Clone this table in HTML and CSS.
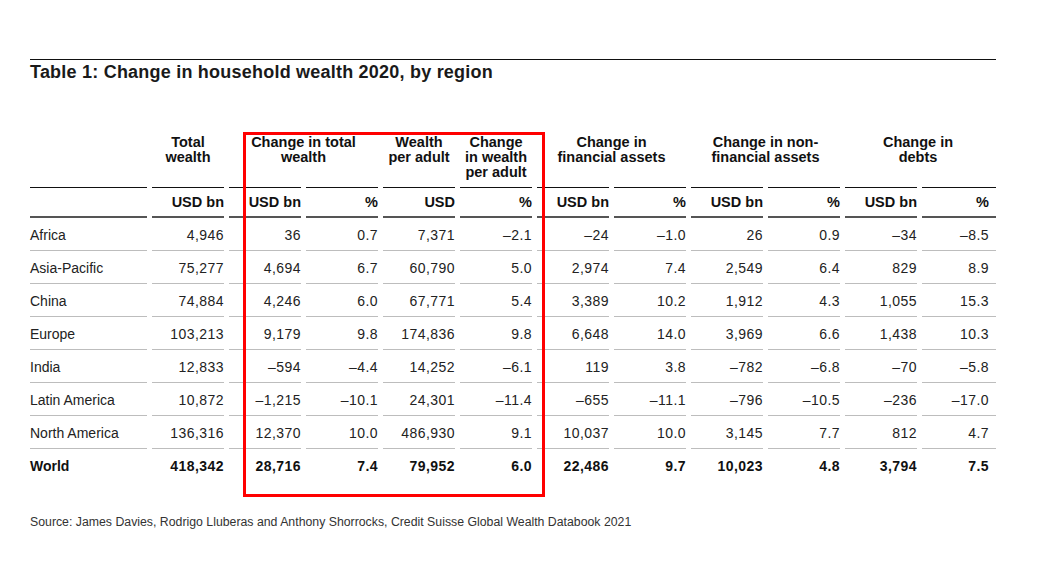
FILE: index.html
```html
<!DOCTYPE html>
<html lang="en">
<head>
<meta charset="utf-8">
<title>Table 1: Change in household wealth 2020, by region</title>
<link rel="stylesheet" href="styles.css">
</head>
<body>
<div class="page">
  <div class="topline"></div>
  <h1 class="title">Table 1: Change in household wealth 2020, by region</h1>

  <div class="table">
    <div class="th"></div>
    <div class="th">Total<br>wealth</div>
    <div class="th span2">Change in total<br>wealth</div>
    <div class="th">Wealth<br>per adult</div>
    <div class="th">Change<br>in wealth<br>per adult</div>
    <div class="th span2">Change in<br>financial assets</div>
    <div class="th span2">Change in non-<br>financial assets</div>
    <div class="th span2 last">Change in<br>debts</div>

    <div class="unit"></div>
    <div class="unit">USD bn</div>
    <div class="unit">USD bn</div>
    <div class="unit">%</div>
    <div class="unit">USD</div>
    <div class="unit">%</div>
    <div class="unit">USD bn</div>
    <div class="unit">%</div>
    <div class="unit">USD bn</div>
    <div class="unit">%</div>
    <div class="unit">USD bn</div>
    <div class="unit last">%</div>

    <div class="td name">Africa</div>
    <div class="td">4,946</div><div class="td">36</div><div class="td">0.7</div><div class="td">7,371</div><div class="td">–2.1</div>
    <div class="td">–24</div><div class="td">–1.0</div><div class="td">26</div><div class="td">0.9</div><div class="td">–34</div><div class="td last">–8.5</div>

    <div class="td name">Asia-Pacific</div>
    <div class="td">75,277</div><div class="td">4,694</div><div class="td">6.7</div><div class="td">60,790</div><div class="td">5.0</div>
    <div class="td">2,974</div><div class="td">7.4</div><div class="td">2,549</div><div class="td">6.4</div><div class="td">829</div><div class="td last">8.9</div>

    <div class="td name">China</div>
    <div class="td">74,884</div><div class="td">4,246</div><div class="td">6.0</div><div class="td">67,771</div><div class="td">5.4</div>
    <div class="td">3,389</div><div class="td">10.2</div><div class="td">1,912</div><div class="td">4.3</div><div class="td">1,055</div><div class="td last">15.3</div>

    <div class="td name">Europe</div>
    <div class="td">103,213</div><div class="td">9,179</div><div class="td">9.8</div><div class="td">174,836</div><div class="td">9.8</div>
    <div class="td">6,648</div><div class="td">14.0</div><div class="td">3,969</div><div class="td">6.6</div><div class="td">1,438</div><div class="td last">10.3</div>

    <div class="td name">India</div>
    <div class="td">12,833</div><div class="td">–594</div><div class="td">–4.4</div><div class="td">14,252</div><div class="td">–6.1</div>
    <div class="td">119</div><div class="td">3.8</div><div class="td">–782</div><div class="td">–6.8</div><div class="td">–70</div><div class="td last">–5.8</div>

    <div class="td name">Latin America</div>
    <div class="td">10,872</div><div class="td">–1,215</div><div class="td">–10.1</div><div class="td">24,301</div><div class="td">–11.4</div>
    <div class="td">–655</div><div class="td">–11.1</div><div class="td">–796</div><div class="td">–10.5</div><div class="td">–236</div><div class="td last">–17.0</div>

    <div class="td name">North America</div>
    <div class="td">136,316</div><div class="td">12,370</div><div class="td">10.0</div><div class="td">486,930</div><div class="td">9.1</div>
    <div class="td">10,037</div><div class="td">10.0</div><div class="td">3,145</div><div class="td">7.7</div><div class="td">812</div><div class="td last">4.7</div>

    <div class="td total name">World</div>
    <div class="td total">418,342</div><div class="td total">28,716</div><div class="td total">7.4</div><div class="td total">79,952</div><div class="td total">6.0</div>
    <div class="td total">22,486</div><div class="td total">9.7</div><div class="td total">10,023</div><div class="td total">4.8</div><div class="td total">3,794</div><div class="td total last">7.5</div>
  </div>

  <p class="source">Source: James Davies, Rodrigo Lluberas and Anthony Shorrocks, Credit Suisse Global Wealth Databook 2021</p>

  <div class="highlight"></div>
</div>
</body>
</html>
```

FILE: styles.css
```css
html, body {
  margin: 0;
  padding: 0;
  background: #ffffff;
}

body {
  font-family: "Liberation Sans", Arial, Helvetica, sans-serif;
  color: #222;
}

.page {
  position: relative;
  width: 966px;
  padding: 59px 0 0 30px;
}

.topline {
  border-top: 1px solid #111;
}

.title {
  margin: 1px 0 0 0;
  font-size: 18px;
  line-height: 22px;
  font-weight: bold;
  color: #1a1a1a;
  letter-spacing: 0.22px;
}

.table {
  display: grid;
  grid-template-columns: 117px repeat(10, 72px) 74px;
  column-gap: 5px;
  margin-top: 52px;
}

.th {
  font-size: 14.5px;
  line-height: 15px;
  font-weight: bold;
  color: #111;
  text-align: center;
  padding-bottom: 7px;
}

.th.last {
  padding-right: 5px;
}

.span2 {
  grid-column: span 2;
}

.unit {
  border-top: 1px solid #111;
  border-bottom: 2px solid #555;
  font-size: 14.5px;
  line-height: 28px;
  font-weight: bold;
  color: #111;
  text-align: right;
}

.td {
  box-sizing: border-box;
  height: 33px;
  padding-top: 2px;
  line-height: 30px;
  border-bottom: 1px solid #bdbdbd;
  font-size: 14px;
  letter-spacing: 0.45px;
  text-align: right;
  color: #222;
}

.td.name {
  text-align: left;
  letter-spacing: 0;
}

.td.total {
  border-bottom: none;
  font-weight: bold;
  color: #111;
}

.unit.last,
.td.last {
  padding-right: 7px;
}

.source {
  margin: 33px 0 0 0;
  font-size: 12.3px;
  line-height: 14px;
  color: #333;
}

.highlight {
  position: absolute;
  left: 243px;
  top: 132px;
  width: 296px;
  height: 359px;
  border: 3px solid #ff0000;
}
```
